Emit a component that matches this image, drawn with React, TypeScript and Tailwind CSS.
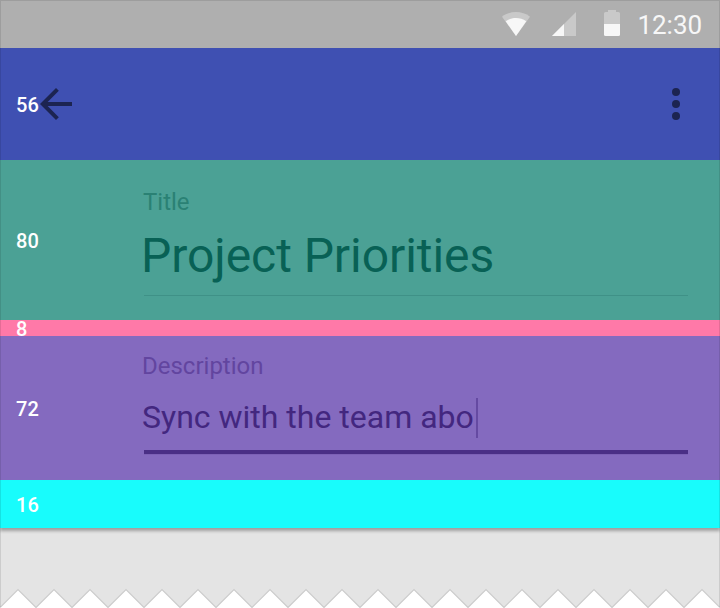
import React from "react";

const teeth = Array.from({ length: 20 }, (_, i) => `L${i * 36 + 18} 1.5 L${i * 36 + 36} 19.5`).join(" ");

function Measure({ value, className }: { value: string; className: string }) {
  return (
    <span className={`block w-[23px] shrink-0 ml-4 text-[20px] leading-5 font-medium tracking-[0.1px] text-white ${className}`}>
      {value}
    </span>
  );
}

function StatusBar() {
  return (
    <div className="flex h-12 bg-[#afafaf]">
      <svg className="ml-[502px] mt-3 h-6 w-7 shrink-0" viewBox="0 0 28 24">
        <path d="M14 24 L0 4.7 C8 -1.5 20 -1.5 28 4.7 Z" fill="#c9c9c9" />
        <path d="M14 24 L3.7 9.3 C10 4.9 18 4.9 24.3 9.3 Z" fill="#f7f7f7" />
      </svg>
      <svg className="ml-[22px] mt-3 h-6 w-6 shrink-0" viewBox="0 0 24 24">
        <path d="M0 24 L24 0 V24 Z" fill="#c9c9c9" />
        <path d="M0 24 L12 12 V24 Z" fill="#f7f7f7" />
      </svg>
      <svg className="ml-7 mt-[10px] h-[26px] w-4 shrink-0" viewBox="0 0 16 26">
        <path d="M4 0 H12 V2 H14.5 Q16 2 16 3.5 V14 H0 V3.5 Q0 2 1.5 2 H4 Z" fill="#c9c9c9" />
        <path d="M0 14 H16 V24.5 Q16 26 14.5 26 H1.5 Q0 26 0 24.5 Z" fill="#f7f7f7" />
      </svg>
      <span className="ml-[17.4px] mt-[9px] text-[26px] leading-8 text-[#f7f7f7]">12:30</span>
    </div>
  );
}

export default function App() {
  return (
    <div className="relative h-[608px] w-[720px] overflow-hidden bg-[#e4e4e4] font-['Roboto',sans-serif] whitespace-nowrap">
      <StatusBar />
      <div className="shadow-[0_3px_3px_rgba(0,0,0,0.3)]">
        <header className="flex h-28 bg-[#3f50b2]">
          <Measure value="56" className="mt-[47px]" />
          <svg className="-ml-[7px] mt-8 h-12 w-12 shrink-0" viewBox="0 0 24 24" fill="#1c2451">
            <path d="M20 11H7.83l5.59-5.59L12 4l-8 8 8 8 1.41-1.41L7.83 13H20v-2z" />
          </svg>
          <svg className="ml-auto mr-5 mt-8 h-12 w-12 shrink-0" viewBox="0 0 24 24" fill="#1c2451">
            <circle cx="12" cy="6" r="2" />
            <circle cx="12" cy="12" r="2" />
            <circle cx="12" cy="18" r="2" />
          </svg>
        </header>
        <section className="flex h-40 bg-[#4ba195]">
          <Measure value="80" className="mt-[71px]" />
          <div className="ml-[105px] w-[544px] pt-[30px]">
            <div className="-ml-[1px] text-[24px] leading-6 text-[#2a8174]">Title</div>
            <div className="-ml-[3px] mt-[18px] text-[48px] leading-[48px] tracking-[-0.06px] text-[#086155]">Project Priorities</div>
            <div className="mt-[15px] h-px bg-[#3f9187]" />
          </div>
        </section>
        <div className="h-4 bg-[#ff79a8]">
          <Measure value="8" className="-translate-y-px" />
        </div>
        <section className="flex h-36 bg-[#846abf]">
          <Measure value="72" className="mt-[63px]" />
          <div className="ml-[105px] w-[544px] pt-[18px]">
            <div className="-ml-[2px] text-[24px] leading-6 text-[#62459f]">Description</div>
            <div className="-ml-[2px] mt-5 flex h-10 text-[32px] text-[#43277f]">
              <span className="w-[334px] pt-[3px] leading-8">Sync with the team abo</span>
              <span className="h-10 w-[2px] bg-[#654aa2]" />
            </div>
            <div className="mt-3 h-[5px] border-b border-[#7c61b6] bg-[#4a2f86]" />
          </div>
        </section>
        <div className="flex h-12 bg-[#18fcfc]">
          <Measure value="16" className="mt-[15px]" />
        </div>
      </div>
      <svg className="mt-[60px] block h-5 w-[720px]" viewBox="0 0 720 20">
        <path d={`M0 20 V19.5 ${teeth} V20 Z`} fill="#fff" />
        <path d={`M0 19.5 ${teeth}`} fill="none" stroke="#cccccc" strokeWidth="1.2" />
      </svg>
      <div className="pointer-events-none absolute inset-x-0 top-0 h-[607px] border-x border-t border-black/10" />
    </div>
  );
}
